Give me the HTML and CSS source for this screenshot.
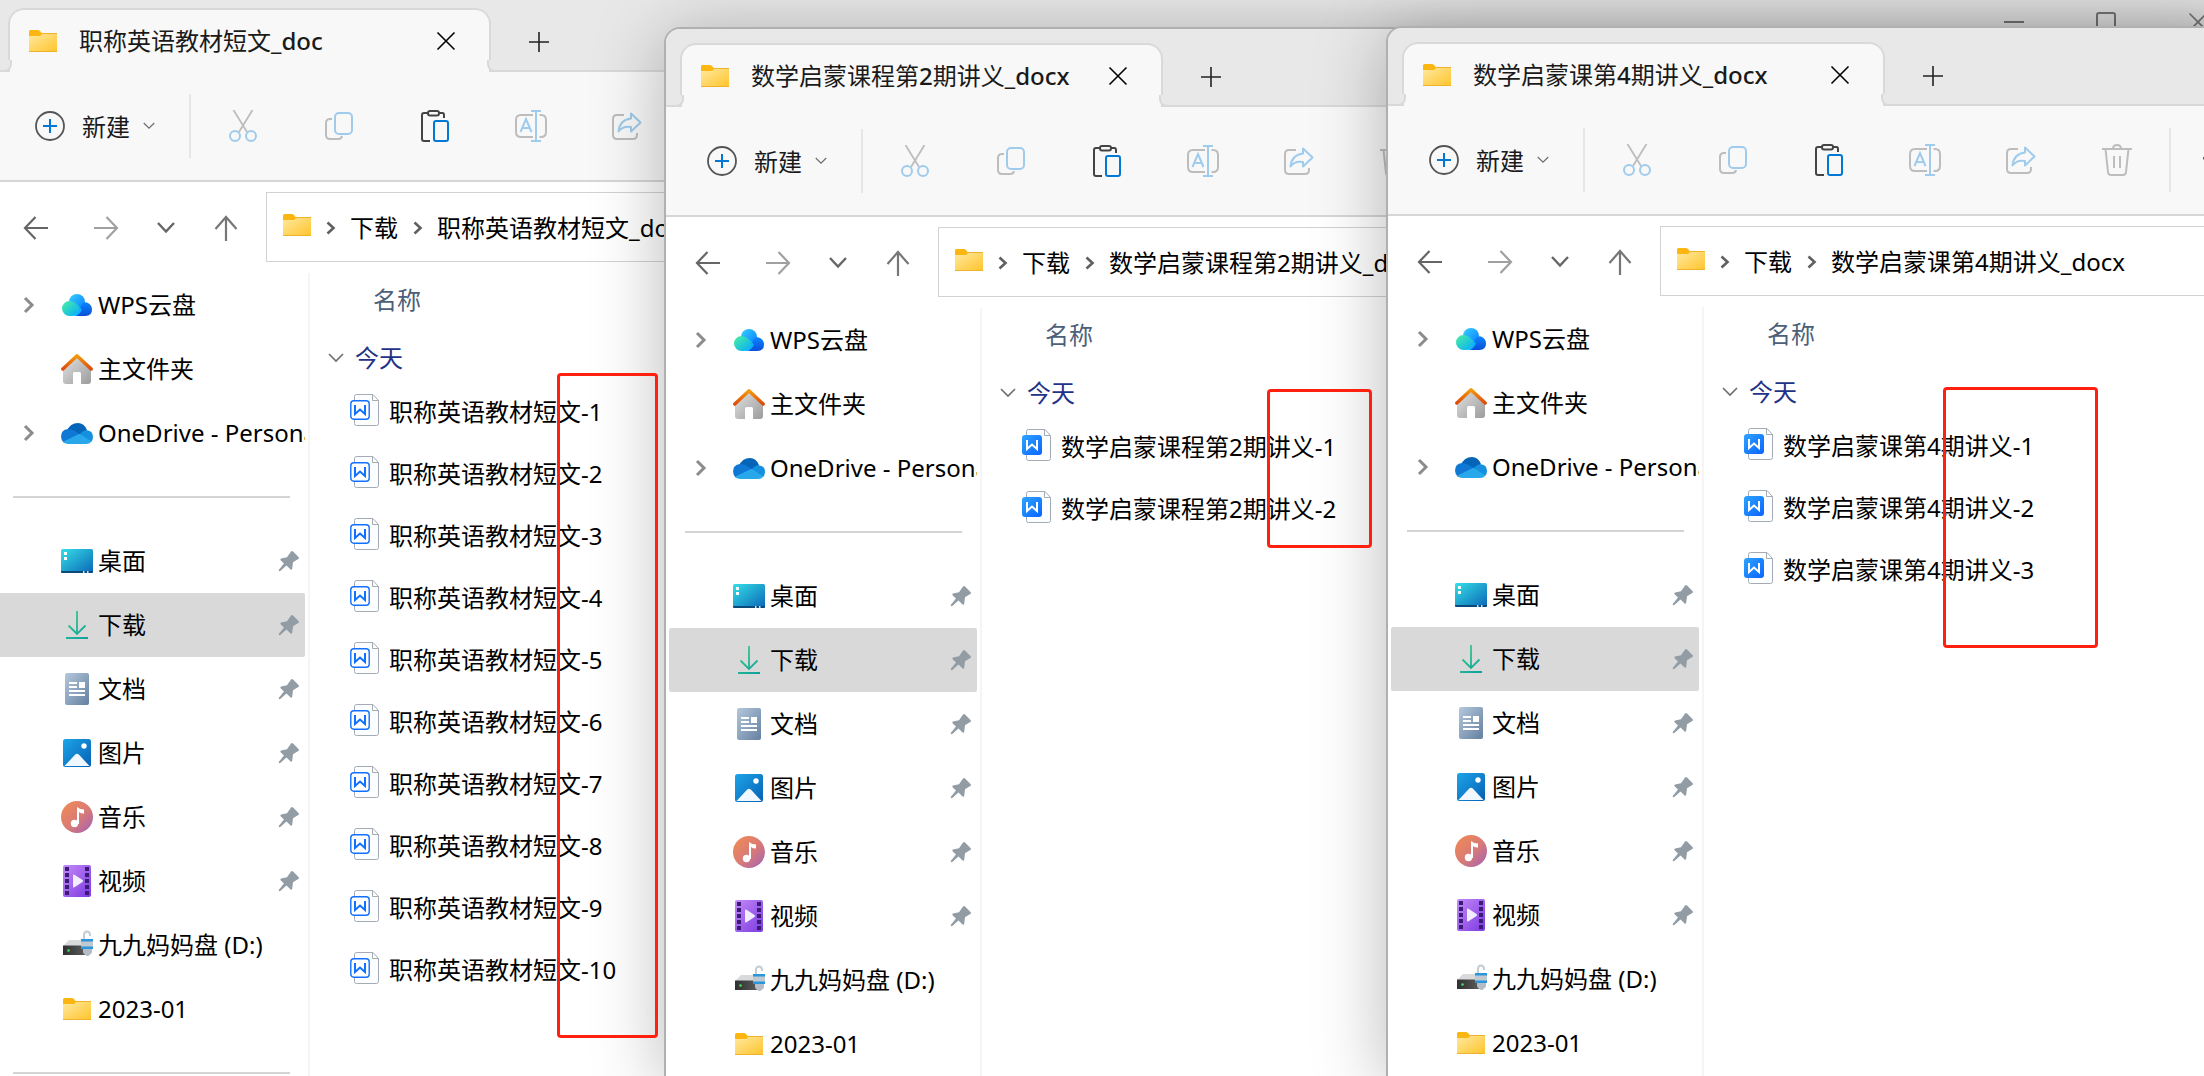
FILE: index.html
```html
<!DOCTYPE html>
<html lang="zh-CN">
<head>
<meta charset="utf-8">
<title>文件资源管理器</title>
<link rel="stylesheet" href="styles.css">
</head>
<body>
<svg class="sprite" aria-hidden="true">
  <defs>
    <linearGradient id="g-folder" x1="0" y1="0" x2="1" y2="1"><stop offset="0" stop-color="#ffe9a0"/><stop offset="1" stop-color="#ffc52e"/></linearGradient>
    <linearGradient id="g-wps-l" x1="0" y1="0" x2="1" y2="1"><stop offset="0" stop-color="#4df0a0"/><stop offset="1" stop-color="#00aaff"/></linearGradient>
    <linearGradient id="g-wps-t" x1="0" y1="0" x2="1" y2="1"><stop offset="0" stop-color="#35d0ff"/><stop offset="1" stop-color="#0a7cff"/></linearGradient>
    <linearGradient id="g-wps-r" x1="0" y1="0" x2="0" y2="1"><stop offset="0" stop-color="#0a86ff"/><stop offset="1" stop-color="#0a4fd8"/></linearGradient>
    <linearGradient id="g-roof" x1="0" y1="0" x2="0" y2="1"><stop offset="0" stop-color="#f59a0c"/><stop offset="1" stop-color="#dc4a0c"/></linearGradient>
    <linearGradient id="g-wall" x1="0" y1="0" x2="1" y2="1"><stop offset="0" stop-color="#e2e2e2"/><stop offset="1" stop-color="#9c9c9c"/></linearGradient>
    <linearGradient id="g-desk" x1="0" y1="0" x2="1" y2="1"><stop offset="0" stop-color="#35dfe6"/><stop offset="1" stop-color="#0a66b8"/></linearGradient>
    <linearGradient id="g-down" gradientUnits="userSpaceOnUse" x1="5" y1="2" x2="27" y2="30"><stop offset="0" stop-color="#3ccf84"/><stop offset="1" stop-color="#0fa0a0"/></linearGradient>
    <linearGradient id="g-docs" x1="0" y1="0" x2="1" y2="1"><stop offset="0" stop-color="#b4c8dc"/><stop offset="1" stop-color="#6480a0"/></linearGradient>
    <linearGradient id="g-pic" x1="0" y1="0" x2="1" y2="1"><stop offset="0" stop-color="#1ea4e8"/><stop offset="1" stop-color="#0560b4"/></linearGradient>
    <linearGradient id="g-mus" x1="0" y1="0" x2="1" y2="1"><stop offset="0" stop-color="#f28c50"/><stop offset=".55" stop-color="#d87a78"/><stop offset="1" stop-color="#a060b8"/></linearGradient>
    <linearGradient id="g-vid" x1="0" y1="0" x2="1" y2="1"><stop offset="0" stop-color="#c48af8"/><stop offset="1" stop-color="#7c3ae0"/></linearGradient>
    <linearGradient id="g-drive" x1="0" y1="0" x2="1" y2="0"><stop offset="0" stop-color="#303030"/><stop offset="1" stop-color="#5a5a5a"/></linearGradient>
    <linearGradient id="g-w" x1="0" y1="0" x2="1" y2="1"><stop offset="0" stop-color="#2ea4ff"/><stop offset="1" stop-color="#0a64ff"/></linearGradient>
  </defs>
  <symbol id="folder" viewBox="0 0 28 22"><path fill="#fbb612" d="M0 1.5Q0 0 1.500 0H9Q10.500 0 11.500 1.500L13 3.500H28V12H0Z"/><path fill="url(#g-folder)" d="M0 6H10.500Q12 6 13 4.200Q13.500 3.500 14.500 3.500H28V21H0Z"/><path fill="#eeb22c" d="M13 3h15v1H13zM0 21h28v1H0z"/></symbol>
  <symbol id="wps" viewBox="0 0 32 32"><circle cx="16" cy="13" r="8" fill="url(#g-wps-t)"/><path fill="url(#g-wps-r)" d="M15 27 L21 15Q24 12 27 14Q31 16 31 20.500Q31 27 24.500 27Z"/><path fill="url(#g-wps-l)" d="M8.500 12Q12.500 12 15 14.500L19 18.500Q15.500 27 11 27H8.500A7.500 7.500 0 0 1 8.500 12Z"/><path fill="#0ab0ff" d="M12 27Q16 25 19 18.500L21 20.500Q18 27 14 27Z"/></symbol>
  <symbol id="home" viewBox="0 0 32 32"><path fill="url(#g-wall)" d="M2 15 16 3l14 12v13a3 3 0 0 1-3 3h-7V20.500a1.500 1.500 0 0 0-1.500-1.500h-5a1.500 1.500 0 0 0-1.500 1.500V31H5a3 3 0 0 1-3-3Z"/><path fill="none" stroke="url(#g-roof)" stroke-width="3.400" stroke-linecap="round" stroke-linejoin="round" d="M1.800 16 16 2.800 30.200 16"/></symbol>
  <symbol id="onedrive" viewBox="0 0 32 32"><path fill="#0364b8" d="M6 14Q9 6 17 6Q23 6 26 13L18 20Z"/><path fill="#0f78d4" d="M7 12Q11 12 14 14L20 18 3 26Q0 23 0 19.500Q0 12.500 7 12Z"/><path fill="#1490df" d="M19 17Q22 13 26 13.200Q32 14 32 20Q32 23 30 25L17 18.500Z"/><path fill="#28a8ea" d="M18.500 16.800 30.500 24.500Q28.500 27 25 27H7Q4.500 27 2.500 24.500Z"/></symbol>
  <symbol id="desktop" viewBox="0 0 32 32"><rect y="4" width="32" height="24" rx="1.500" fill="url(#g-desk)"/><path fill="#0b4a78" d="M0 26h32v.5q0 1.500-1.500 1.500h-29Q0 28 0 26.500Z"/><path fill="#fff" d="M3 7h3v3H3zM3 12h3v3H3z"/><path fill="#bfe4ff" d="M22 26h1.500v2H22zM26 26h1.500v2H26z"/></symbol>
  <symbol id="download" viewBox="0 0 32 32"><path fill="none" stroke="url(#g-down)" stroke-width="1.800" d="M16.010 2 16 25M7.500 16.500 16 25l8.500-8.500M5 29h22.010"/></symbol>
  <symbol id="docs" viewBox="0 0 32 32"><rect x="4" width="24" height="32" rx="2" fill="url(#g-docs)"/><path fill="#fff" d="M8 9h8v2H8zM8 13h8v2H8zM8 17h16v2H8zM8 21h16v2H8zM18 9h6v6h-6z"/></symbol>
  <symbol id="pictures" viewBox="0 0 32 32"><rect x="2" y="2" width="28" height="28" rx="2.500" fill="url(#g-pic)"/><circle cx="23" cy="9" r="2.700" fill="#fff"/><path fill="#f0f7ff" d="M3.500 29 14 17.800q2-2 4 0L28.500 29Z"/></symbol>
  <symbol id="music" viewBox="0 0 32 32"><circle cx="16" cy="16" r="16" fill="url(#g-mus)"/><circle cx="13.500" cy="22.500" r="3.700" fill="#fff"/><path fill="#fff" d="M16 6q3 2.500 7 2.500v4q-3.500 0-5-1.500v12h-2z"/></symbol>
  <symbol id="video" viewBox="0 0 32 32"><rect x="2" width="28" height="32" rx="2" fill="url(#g-vid)"/><path fill="#3b1b78" d="M4 2h4v4H4zM4 8h4v4H4zM4 14h4v4H4zM4 20h4v4H4zM4 26h4v4H4zM24 2h4v4h-4zM24 8h4v4h-4zM24 14h4v4h-4zM24 20h4v4h-4zM24 26h4v4h-4z"/><path fill="#f2ecff" d="M12 10.500q0-1.500 1.500-.8l8 5.300q1.200 1 0 2l-8 5.300Q12 23 12 21.500Z"/></symbol>
  <symbol id="drive" viewBox="0 0 32 32"><path fill="#d9dadc" d="M8 11h14v6H2Z"/><path fill="url(#g-drive)" d="M2 16.500h22V26H2Z"/><circle cx="7.500" cy="21.500" r="1.300" fill="#3fe060"/><path fill="none" stroke="#c4ccd4" stroke-width="2" d="M23 11V6q0-3.500 3-3.500t3 3.500v1"/><path fill="#b4bcc6" d="M22 19h9v4q-.5 2-2 2.500-1 1.500-2.500 1.500t-2.500-1.500q-1.500-.5-2-2.500z"/><path fill="#2c96dc" d="M20 10h12v10H20z"/><path fill="#c0c8d0" d="M20 12.500h12v5H20z"/></symbol>
  <symbol id="pin" viewBox="0 0 22 22"><path fill="#929ca4" d="M13 1.500q1-1 2 0L20.500 7q1 1 0 2l-1.500.8-4 2.500-.8 6.500q-.4 1.500-1.600.6L8.500 15.500 2 21.300Q.7 21.500.7 20L6 13.500 2.600 10.300Q1.800 9 3 8.500L9 7.300 12 3Z"/></symbol>
  <symbol id="chev-r" viewBox="0 0 12 18"><path fill="none" stroke="#8c8c8c" stroke-width="3" d="M2 2l7 7-7 7"/></symbol>
  <symbol id="crumb" viewBox="0 0 10 14"><path fill="none" stroke="#606060" stroke-width="2.600" d="M1.500 1.500 7.500 7l-6 5.500"/></symbol>
  <symbol id="chev-d" viewBox="0 0 16 10"><path fill="none" stroke="#6e6e6e" stroke-width="1.600" d="M1 1l7 7 7-7"/></symbol>
  <symbol id="close" viewBox="0 0 20 20"><path fill="none" stroke="currentColor" stroke-width="1.600" d="M1.500 1.500l17 17M18.500 1.500l-17 17"/></symbol>
  <symbol id="plus" viewBox="0 0 20 20"><path fill="none" stroke="#222" stroke-width="1.600" d="M10 0v20M0 10h20"/></symbol>
  <symbol id="min" viewBox="0 0 20 20"><path fill="none" stroke="#777" stroke-width="2" d="M0 10h20"/></symbol>
  <symbol id="max" viewBox="0 0 20 20"><rect x="1" y="1" width="18" height="18" rx="2" fill="none" stroke="#777" stroke-width="2"/></symbol>
  <symbol id="new" viewBox="0 0 32 32"><circle cx="16" cy="16" r="14" fill="none" stroke="#555" stroke-width="1.800"/><path stroke="#0078d4" stroke-width="2" d="M16 9v14M9 16h14"/></symbol>
  <symbol id="cut" viewBox="0 0 32 32"><path fill="none" stroke="#bdbdbd" stroke-width="1.800" d="M6.500 0 20 22M25.500 0 12 22"/><g fill="none" stroke="#9fcbec" stroke-width="2"><circle cx="8" cy="26" r="5"/><circle cx="24" cy="26" r="5"/></g></symbol>
  <symbol id="copy" viewBox="0 0 32 32"><path fill="none" stroke="#bdbdbd" stroke-width="2" d="M9 9H6.500Q3 9.500 3 13v12q0 4 4 4h8q3.500 0 4-3"/><rect x="12" y="3" width="17" height="21" rx="4" fill="none" stroke="#9fcbec" stroke-width="2"/></symbol>
  <symbol id="paste" viewBox="0 0 32 32"><path fill="none" stroke="#444" stroke-width="2" d="M11 31H5q-2 0-2-2V5q0-2 2-2h4M20 3h3.500Q25 3 25 5v3"/><rect x="9" y="1" width="11" height="4.500" rx="2" fill="none" stroke="#444" stroke-width="2"/><rect x="15" y="11" width="14" height="20" rx="2" fill="none" stroke="#0078d4" stroke-width="2"/></symbol>
  <symbol id="rename" viewBox="0 0 32 32"><path fill="none" stroke="#bdbdbd" stroke-width="2" d="M18 27H6q-5 0-5-5V10q0-5 5-5h12M24.500 5H26q5 0 5 5v12q0 5-5 5h-1.500"/><path fill="none" stroke="#9fcbec" stroke-width="2" d="M16 1h10M16 31h10M21 1v30M5.500 22 11 9l5.500 13M7.500 18h7"/></symbol>
  <symbol id="share" viewBox="0 0 32 32"><path fill="none" stroke="#bdbdbd" stroke-width="2" d="M13 5H6q-4 0-4 4v16q0 4 4 4h16q4 0 4-4v-2"/><path fill="none" stroke="#9fcbec" stroke-width="2" stroke-linejoin="round" d="M20 3.500 29.500 12.500 20 21.500V17Q12 15.500 7.500 21.500 8.500 10 20 8.500Z"/></symbol>
  <symbol id="trash" viewBox="0 0 32 32"><path fill="none" stroke="#bdbdbd" stroke-width="2" d="M1 5h30M12 5q0-4 4-4t4 4M4.500 5l2.500 23q.3 3 3 3h12q2.700 0 3-3l2.500-23M13 12v12M19 12v12"/></symbol>
  <symbol id="sort" viewBox="0 0 32 32"><path fill="none" stroke="#555" stroke-width="2" d="M8 31V7M0 15l8-8 8 8M23 1v29M16 23l7 7 7-7"/></symbol>
  <symbol id="back" viewBox="0 0 28 28"><path fill="none" stroke="#666" stroke-width="2.200" d="M13.500 3 3 14l10.500 11M3 14h23"/></symbol>
  <symbol id="forward" viewBox="0 0 28 28"><path fill="none" stroke="#a0a0a0" stroke-width="2.200" d="M14.500 3 25 14 14.500 25M25 14H2"/></symbol>
  <symbol id="recent" viewBox="0 0 28 28"><path fill="none" stroke="#666" stroke-width="2.400" d="M6 9l8 8.500L22 9"/></symbol>
  <symbol id="up" viewBox="0 0 28 28"><path fill="none" stroke="#777" stroke-width="2.200" d="M3.500 15 14 3l10.500 12M14 3v24"/></symbol>
  <symbol id="doc-line" viewBox="0 0 29 32"><path fill="#fcfdff" stroke="#a5abb5" d="M4.500 26V2.500q0-2 2-2H23L28.500 6.500V29.500q0 2-2 2h-20q-2 0-2-2ZM22.500.5v6h6"/><rect x=".8" y="6.800" width="18.400" height="18.400" rx="3" fill="#fff" stroke="#1270ff" stroke-width="1.400"/><path fill="none" stroke="#1270ff" stroke-width="2" d="M5 11v9l5-4.500 5 4.500v-9"/></symbol>
  <symbol id="doc-fill" viewBox="0 0 29 32"><path fill="#fcfdff" stroke="#a5abb5" d="M4.500 26V2.500q0-2 2-2H23L28.500 6.500V29.500q0 2-2 2h-20q-2 0-2-2ZM22.500.5v6h6"/><rect y="6" width="20" height="20" rx="3" fill="url(#g-w)"/><path fill="none" stroke="#fff" stroke-width="2" d="M5 11v9l5-4.500 5 4.500v-9"/></symbol>
</svg>

<main class="desktop">
  <section class="window window-doc" aria-label="职称英语教材短文_doc">
    <header class="tabstrip">
      <div class="tab"><svg class="folder"><use href="#folder"/></svg><span class="tab-title">职称英语教材短文<b>_doc</b></span><button class="tab-close" aria-label="关闭标签页"><svg class="i20"><use href="#close"/></svg></button></div>
      <button class="tab-new" aria-label="新建标签页"><svg class="i20"><use href="#plus"/></svg></button>
      <div class="caption">
        <button aria-label="最小化"><svg class="i20"><use href="#min"/></svg></button>
        <button aria-label="最大化"><svg class="i20"><use href="#max"/></svg></button>
        <button aria-label="关闭"><svg class="i20"><use href="#close"/></svg></button>
      </div>
    </header>
    <div class="toolbar">
      <button class="new"><svg class="i32"><use href="#new"/></svg><span>新建</span><svg class="caret"><use href="#chev-d"/></svg></button>
      <button class="tool" aria-label="剪切"><svg class="i32"><use href="#cut"/></svg></button>
      <button class="tool" aria-label="复制"><svg class="i32"><use href="#copy"/></svg></button>
      <button class="tool" aria-label="粘贴"><svg class="i32"><use href="#paste"/></svg></button>
      <button class="tool" aria-label="重命名"><svg class="i32"><use href="#rename"/></svg></button>
      <button class="tool" aria-label="共享"><svg class="i32"><use href="#share"/></svg></button>
    </div>
    <div class="navbar">
      <button class="go" aria-label="后退"><svg><use href="#back"/></svg></button>
      <button class="go" aria-label="前进"><svg><use href="#forward"/></svg></button>
      <button class="go narrow" aria-label="最近位置"><svg><use href="#recent"/></svg></button>
      <button class="go" aria-label="上移"><svg><use href="#up"/></svg></button>
      <nav class="address"><svg class="folder"><use href="#folder"/></svg><svg class="crumb"><use href="#crumb"/></svg><a href="#">下载</a><svg class="crumb"><use href="#crumb"/></svg><a href="#">职称英语教材短文_doc</a></nav>
    </div>
    <div class="body">
      <nav class="sidebar">
        <a class="place" href="#"><svg class="twist"><use href="#chev-r"/></svg><svg class="i32"><use href="#wps"/></svg><span>WPS云盘</span></a>
        <a class="place leaf" href="#"><svg class="i32"><use href="#home"/></svg><span>主文件夹</span></a>
        <a class="place" href="#"><svg class="twist"><use href="#chev-r"/></svg><svg class="i32"><use href="#onedrive"/></svg><span>OneDrive - Personal</span></a>
        <hr>
        <a class="place leaf" href="#"><svg class="i32"><use href="#desktop"/></svg><span>桌面</span><svg class="pin"><use href="#pin"/></svg></a>
        <a class="place leaf selected" href="#"><svg class="i32"><use href="#download"/></svg><span>下载</span><svg class="pin"><use href="#pin"/></svg></a>
        <a class="place leaf" href="#"><svg class="i32"><use href="#docs"/></svg><span>文档</span><svg class="pin"><use href="#pin"/></svg></a>
        <a class="place leaf" href="#"><svg class="i32"><use href="#pictures"/></svg><span>图片</span><svg class="pin"><use href="#pin"/></svg></a>
        <a class="place leaf" href="#"><svg class="i32"><use href="#music"/></svg><span>音乐</span><svg class="pin"><use href="#pin"/></svg></a>
        <a class="place leaf" href="#"><svg class="i32"><use href="#video"/></svg><span>视频</span><svg class="pin"><use href="#pin"/></svg></a>
        <a class="place leaf" href="#"><svg class="i32"><use href="#drive"/></svg><span>九九妈妈盘 (D:)</span></a>
        <a class="place leaf" href="#"><svg class="folder"><use href="#folder"/></svg><span>2023-01</span></a>
        <hr>
      </nav>
      <div class="files">
        <div class="column">名称</div>
        <h2 class="group"><svg><use href="#chev-d"/></svg>今天</h2>
        <ul>
          <li><svg><use href="#doc-line"/></svg>职称英语教材短文-1</li>
          <li><svg><use href="#doc-line"/></svg>职称英语教材短文-2</li>
          <li><svg><use href="#doc-line"/></svg>职称英语教材短文-3</li>
          <li><svg><use href="#doc-line"/></svg>职称英语教材短文-4</li>
          <li><svg><use href="#doc-line"/></svg>职称英语教材短文-5</li>
          <li><svg><use href="#doc-line"/></svg>职称英语教材短文-6</li>
          <li><svg><use href="#doc-line"/></svg>职称英语教材短文-7</li>
          <li><svg><use href="#doc-line"/></svg>职称英语教材短文-8</li>
          <li><svg><use href="#doc-line"/></svg>职称英语教材短文-9</li>
          <li><svg><use href="#doc-line"/></svg>职称英语教材短文-10</li>
        </ul>
      </div>
    </div>
  </section>

  <section class="window window-term2" aria-label="数学启蒙课程第2期讲义_docx">
    <header class="tabstrip">
      <div class="tab"><svg class="folder"><use href="#folder"/></svg><span class="tab-title">数学启蒙课程第<b>2</b>期讲义<b>_docx</b></span><button class="tab-close" aria-label="关闭标签页"><svg class="i20"><use href="#close"/></svg></button></div>
      <button class="tab-new" aria-label="新建标签页"><svg class="i20"><use href="#plus"/></svg></button>
    </header>
    <div class="toolbar">
      <button class="new"><svg class="i32"><use href="#new"/></svg><span>新建</span><svg class="caret"><use href="#chev-d"/></svg></button>
      <button class="tool" aria-label="剪切"><svg class="i32"><use href="#cut"/></svg></button>
      <button class="tool" aria-label="复制"><svg class="i32"><use href="#copy"/></svg></button>
      <button class="tool" aria-label="粘贴"><svg class="i32"><use href="#paste"/></svg></button>
      <button class="tool" aria-label="重命名"><svg class="i32"><use href="#rename"/></svg></button>
      <button class="tool" aria-label="共享"><svg class="i32"><use href="#share"/></svg></button>
      <button class="tool" aria-label="删除"><svg class="i32"><use href="#trash"/></svg></button>
    </div>
    <div class="navbar">
      <button class="go" aria-label="后退"><svg><use href="#back"/></svg></button>
      <button class="go" aria-label="前进"><svg><use href="#forward"/></svg></button>
      <button class="go narrow" aria-label="最近位置"><svg><use href="#recent"/></svg></button>
      <button class="go" aria-label="上移"><svg><use href="#up"/></svg></button>
      <nav class="address"><svg class="folder"><use href="#folder"/></svg><svg class="crumb"><use href="#crumb"/></svg><a href="#">下载</a><svg class="crumb"><use href="#crumb"/></svg><a href="#">数学启蒙课程第2期讲义_docx</a></nav>
    </div>
    <div class="body">
      <nav class="sidebar">
        <a class="place" href="#"><svg class="twist"><use href="#chev-r"/></svg><svg class="i32"><use href="#wps"/></svg><span>WPS云盘</span></a>
        <a class="place leaf" href="#"><svg class="i32"><use href="#home"/></svg><span>主文件夹</span></a>
        <a class="place" href="#"><svg class="twist"><use href="#chev-r"/></svg><svg class="i32"><use href="#onedrive"/></svg><span>OneDrive - Personal</span></a>
        <hr>
        <a class="place leaf" href="#"><svg class="i32"><use href="#desktop"/></svg><span>桌面</span><svg class="pin"><use href="#pin"/></svg></a>
        <a class="place leaf selected" href="#"><svg class="i32"><use href="#download"/></svg><span>下载</span><svg class="pin"><use href="#pin"/></svg></a>
        <a class="place leaf" href="#"><svg class="i32"><use href="#docs"/></svg><span>文档</span><svg class="pin"><use href="#pin"/></svg></a>
        <a class="place leaf" href="#"><svg class="i32"><use href="#pictures"/></svg><span>图片</span><svg class="pin"><use href="#pin"/></svg></a>
        <a class="place leaf" href="#"><svg class="i32"><use href="#music"/></svg><span>音乐</span><svg class="pin"><use href="#pin"/></svg></a>
        <a class="place leaf" href="#"><svg class="i32"><use href="#video"/></svg><span>视频</span><svg class="pin"><use href="#pin"/></svg></a>
        <a class="place leaf" href="#"><svg class="i32"><use href="#drive"/></svg><span>九九妈妈盘 (D:)</span></a>
        <a class="place leaf" href="#"><svg class="folder"><use href="#folder"/></svg><span>2023-01</span></a>
      </nav>
      <div class="files">
        <div class="column">名称</div>
        <h2 class="group"><svg><use href="#chev-d"/></svg>今天</h2>
        <ul>
          <li><svg><use href="#doc-fill"/></svg>数学启蒙课程第2期讲义-1</li>
          <li><svg><use href="#doc-fill"/></svg>数学启蒙课程第2期讲义-2</li>
        </ul>
      </div>
    </div>
  </section>

  <section class="window window-term4" aria-label="数学启蒙课第4期讲义_docx">
    <header class="tabstrip">
      <div class="tab"><svg class="folder"><use href="#folder"/></svg><span class="tab-title">数学启蒙课第<b>4</b>期讲义<b>_docx</b></span><button class="tab-close" aria-label="关闭标签页"><svg class="i20"><use href="#close"/></svg></button></div>
      <button class="tab-new" aria-label="新建标签页"><svg class="i20"><use href="#plus"/></svg></button>
    </header>
    <div class="toolbar">
      <button class="new"><svg class="i32"><use href="#new"/></svg><span>新建</span><svg class="caret"><use href="#chev-d"/></svg></button>
      <button class="tool" aria-label="剪切"><svg class="i32"><use href="#cut"/></svg></button>
      <button class="tool" aria-label="复制"><svg class="i32"><use href="#copy"/></svg></button>
      <button class="tool" aria-label="粘贴"><svg class="i32"><use href="#paste"/></svg></button>
      <button class="tool" aria-label="重命名"><svg class="i32"><use href="#rename"/></svg></button>
      <button class="tool" aria-label="共享"><svg class="i32"><use href="#share"/></svg></button>
      <button class="tool last" aria-label="删除"><svg class="i32"><use href="#trash"/></svg></button>
      <button class="tool" aria-label="排序"><svg class="i32"><use href="#sort"/></svg></button>
    </div>
    <div class="navbar">
      <button class="go" aria-label="后退"><svg><use href="#back"/></svg></button>
      <button class="go" aria-label="前进"><svg><use href="#forward"/></svg></button>
      <button class="go narrow" aria-label="最近位置"><svg><use href="#recent"/></svg></button>
      <button class="go" aria-label="上移"><svg><use href="#up"/></svg></button>
      <nav class="address"><svg class="folder"><use href="#folder"/></svg><svg class="crumb"><use href="#crumb"/></svg><a href="#">下载</a><svg class="crumb"><use href="#crumb"/></svg><a href="#">数学启蒙课第4期讲义_docx</a></nav>
    </div>
    <div class="body">
      <nav class="sidebar">
        <a class="place" href="#"><svg class="twist"><use href="#chev-r"/></svg><svg class="i32"><use href="#wps"/></svg><span>WPS云盘</span></a>
        <a class="place leaf" href="#"><svg class="i32"><use href="#home"/></svg><span>主文件夹</span></a>
        <a class="place" href="#"><svg class="twist"><use href="#chev-r"/></svg><svg class="i32"><use href="#onedrive"/></svg><span>OneDrive - Personal</span></a>
        <hr>
        <a class="place leaf" href="#"><svg class="i32"><use href="#desktop"/></svg><span>桌面</span><svg class="pin"><use href="#pin"/></svg></a>
        <a class="place leaf selected" href="#"><svg class="i32"><use href="#download"/></svg><span>下载</span><svg class="pin"><use href="#pin"/></svg></a>
        <a class="place leaf" href="#"><svg class="i32"><use href="#docs"/></svg><span>文档</span><svg class="pin"><use href="#pin"/></svg></a>
        <a class="place leaf" href="#"><svg class="i32"><use href="#pictures"/></svg><span>图片</span><svg class="pin"><use href="#pin"/></svg></a>
        <a class="place leaf" href="#"><svg class="i32"><use href="#music"/></svg><span>音乐</span><svg class="pin"><use href="#pin"/></svg></a>
        <a class="place leaf" href="#"><svg class="i32"><use href="#video"/></svg><span>视频</span><svg class="pin"><use href="#pin"/></svg></a>
        <a class="place leaf" href="#"><svg class="i32"><use href="#drive"/></svg><span>九九妈妈盘 (D:)</span></a>
        <a class="place leaf" href="#"><svg class="folder"><use href="#folder"/></svg><span>2023-01</span></a>
      </nav>
      <div class="files">
        <div class="column">名称</div>
        <h2 class="group"><svg><use href="#chev-d"/></svg>今天</h2>
        <ul>
          <li><svg><use href="#doc-fill"/></svg>数学启蒙课第4期讲义-1</li>
          <li><svg><use href="#doc-fill"/></svg>数学启蒙课第4期讲义-2</li>
          <li><svg><use href="#doc-fill"/></svg>数学启蒙课第4期讲义-3</li>
        </ul>
      </div>
    </div>
  </section>

  <div class="mark mark-doc"></div>
  <div class="mark mark-term2"></div>
  <div class="mark mark-term4"></div>
</main>
</body>
</html>
```
FILE: styles.css
```css
* { box-sizing: border-box; }

body {
  margin: 0;
  font: 24px/32px "Noto Sans", "Noto Sans CJK SC", sans-serif;
  color: #000;
}

a { color: inherit; text-decoration: none; }
button { border: 0; padding: 0; background: none; font: inherit; color: inherit; }
svg { display: block; flex: none; }
.sprite { position: absolute; width: 0; height: 0; }
.i20 { width: 20px; height: 20px; }
.i32 { width: 32px; height: 32px; }
.folder { width: 28px; height: 22px; }

.desktop {
  position: relative;
  height: 100vh;
  overflow: hidden;
  background: #e8e8e8;
}

/* Windows float freely on the desktop */
.window {
  position: absolute;
  right: -42px;
  bottom: -2px;
  display: flex;
  flex-direction: column;
  overflow: hidden;
  border: 2px solid #b0b0b0;
  border-radius: 16px 0 0 0;
  background: #fff;
  background-clip: padding-box;
  box-shadow: 0 8px 72px rgba(0, 0, 0, .28);
}
.window-doc { left: -8px; top: -8px; }
.window-term2 { left: 664px; top: 27px; }
.window-term4 { left: 1386px; top: 26px; }

/* Tab strip */
.tabstrip {
  flex: none;
  display: flex;
  align-items: flex-end;
  height: 78px;
  padding-left: 14px;
  background: #e8e8e8;
  box-shadow: inset 0 -2px #d9d9d9;
}
.tab {
  position: relative;
  display: flex;
  align-items: center;
  width: 483px;
  height: 64px;
  padding: 0 33px 0 19px;
  border: 2px solid #d9d9d9;
  border-bottom: 0;
  border-radius: 16px 16px 0 0;
  background: #f8f8f8;
}
.tab::before, .tab::after {
  content: "";
  position: absolute;
  bottom: 0;
  width: 10px;
  height: 10px;
  border-bottom: 2px solid #d9d9d9;
  background: #e8e8e8;
}
.tab::before { left: -10px; border-right: 2px solid #d9d9d9; border-bottom-right-radius: 8px; }
.tab::after { right: -10px; border-left: 2px solid #d9d9d9; border-bottom-left-radius: 8px; }
.tab-title { flex: 1; margin-left: 22px; color: #1a1a1a; white-space: nowrap; }
.tab-title b { font-weight: 500; }
.tab-new { margin: 0 0 20px 38px; }
.caption { display: flex; align-self: flex-start; margin-left: auto; padding-top: 18px; color: #777; }
.caption button { display: grid; place-items: center; width: 92px; }

/* Command bar */
.toolbar {
  flex: none;
  display: flex;
  align-items: center;
  height: 110px;
  padding-left: 6px;
  border-bottom: 2px solid #d6d6d6;
  background: #f8f8f8;
}
.new {
  flex: none;
  display: flex;
  align-items: center;
  width: 191px;
  height: 64px;
  padding-left: 34px;
  border-right: 2px solid #e6e6e6;
  color: #1a1a1a;
}
.new span { margin: 0 13px 0 16px; padding-top: 2px; }
.caret { width: 12px; height: 8px; }
.tool { display: grid; place-items: center; flex: none; width: 96px; height: 64px; }
.new + .tool { margin-left: 4px; }
.tool.last { width: 102px; padding-right: 4px; border-right: 2px solid #e6e6e6; }

/* Navigation row */
.navbar {
  flex: none;
  display: flex;
  align-items: center;
  padding: 10px 0 11px 7px;
}
.go { display: grid; place-items: center; flex: none; width: 70px; height: 70px; padding-top: 2px; }
.go.narrow { width: 50px; }
.go svg { width: 28px; height: 28px; }
.go:last-of-type { margin-right: 5px; }
.address {
  flex: 1;
  display: flex;
  align-items: center;
  height: 70px;
  padding: 2px 0 0 16px;
  border: 1px solid #d2d2d2;
  white-space: nowrap;
}
.address .folder { margin-bottom: 6px; }
.crumb { width: 10px; height: 14px; margin: 0 14px 0 15px; }

/* Panes */
.body { flex: 1; display: flex; min-height: 0; }
.sidebar {
  flex: none;
  display: flex;
  flex-direction: column;
  width: 316px;
  padding: 0 3px;
  border-right: 2px solid #f5f5f5;
  overflow: hidden;
}
.place {
  flex: none;
  display: flex;
  align-items: center;
  height: 64px;
  border-radius: 2px;
  white-space: nowrap;
}
.place.leaf { padding-left: 64px; }
.place.selected { background: #d9d9d9; }
.place span { flex: 1; margin-left: 5px; overflow: hidden; }
.place .folder { margin: 0 2px; }
.twist { width: 12px; height: 18px; margin: 0 26px; }
.pin { width: 22px; height: 22px; margin-right: 5px; }
.sidebar hr { flex: none; width: 277px; height: 2px; margin: 31px 0 31px 16px; border: 0; background: #d4d4d4; }

.files { flex: 1; white-space: nowrap; }
.column { height: 62px; padding: 11px 0 0 63px; color: #4c607a; }
.group {
  display: flex;
  align-items: center;
  height: 46px;
  margin: 0;
  padding-left: 18px;
  color: #1e3287;
  font-size: 24px;
  font-weight: 400;
}
.group svg { width: 16px; height: 10px; margin-right: 11px; }
.files ul { margin: 0; padding: 0; list-style: none; }
.files li { display: flex; align-items: center; height: 62px; padding-left: 40px; }
.files li svg { width: 29px; height: 32px; margin: 0 10px 4px 0; }

/* Highlight frames drawn over the windows */
.mark { position: absolute; border: 3px solid #ff2010; border-radius: 4px; }
.mark-doc { left: 557px; top: 373px; width: 101px; height: 665px; }
.mark-term2 { left: 1267px; top: 389px; width: 105px; height: 159px; }
.mark-term4 { left: 1943px; top: 387px; width: 155px; height: 261px; }
```
